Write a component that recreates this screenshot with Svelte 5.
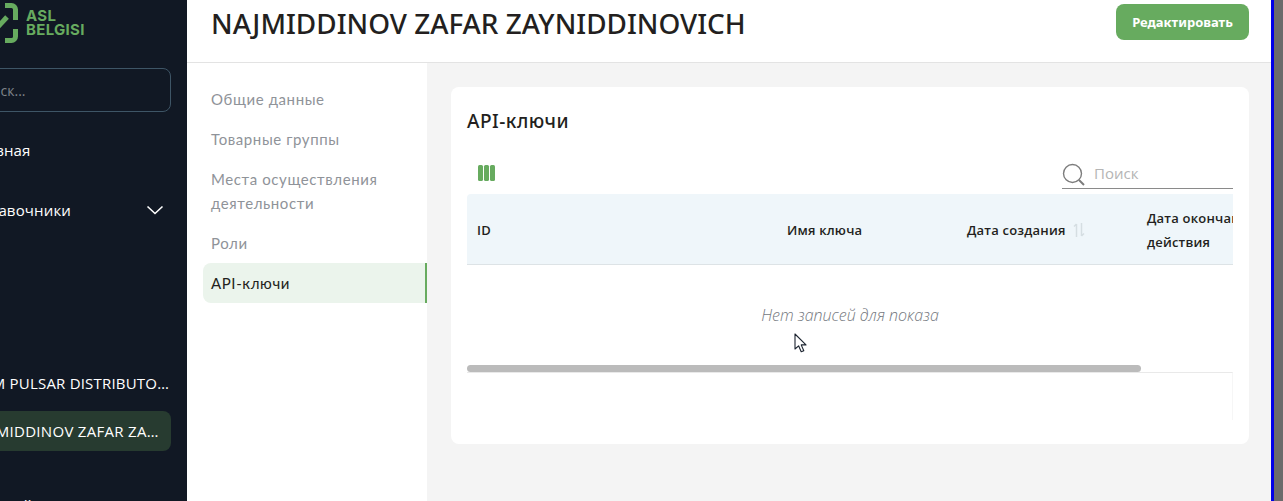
<script lang="ts">
  const navItems = [
    { label: 'Общие данные', active: false },
    { label: 'Товарные группы', active: false },
    { label: 'Места осуществления деятельности', active: false },
    { label: 'Роли', active: false },
    { label: 'API-ключи', active: true }
  ];

  const columns = [
    { label: 'ID', width: 310, sort: false },
    { label: 'Имя ключа', width: 180, sort: false },
    { label: 'Дата создания', width: 180, sort: true },
    { label: 'Дата окончания действия', width: 180, sort: false }
  ];
</script>

{#snippet chevron()}
  <svg width="18" height="10" viewBox="0 0 18 10" fill="none" stroke="#fff" stroke-width="1.6"><path d="M1.500 1.500L9 8.500l7.500-7" /></svg>
{/snippet}

<div class="screen">
  <div class="window">
    <aside class="sidebar">
      <div class="sidebar-inner">
        <div class="logo">
          <svg class="logo-mark" width="50" height="46" viewBox="0 0 50 46" fill="none" stroke="#67ab5f" stroke-width="5">
            <path d="M35 5.500h6.500a4 4 0 0 1 4 4V20" />
            <path d="M45.500 29v7.500a4 4 0 0 1-4 4H35" />
            <path d="M26 29l11-12" />
          </svg>
          <div class="logo-text"><span>ASL</span><span>BELGISI</span></div>
        </div>
        <div class="search">Поиск...</div>
        <div class="menu-item first">Главная</div>
        <div class="menu-item">
          <span>Справочники</span>
          {@render chevron()}
        </div>
        <div class="org-list">
          <div class="org">FIRM PULSAR DISTRIBUTORS LLC</div>
          <div class="org current">NAJMIDDINOV ZAFAR ZAYNIDDINOVICH</div>
        </div>
        <div class="menu-item bottom">
          <span>Настройки</span>
          {@render chevron()}
        </div>
      </div>
    </aside>

    <div class="content">
      <header class="topbar">
        <h1>NAJMIDDINOV ZAFAR ZAYNIDDINOVICH</h1>
        <button class="edit">Редактировать</button>
      </header>

      <div class="body">
        <nav class="subnav">
          {#each navItems as item}
            <div class="subnav-item" class:active={item.active}>{item.label}</div>
          {/each}
        </nav>

        <main class="main">
          <section class="card">
            <h2>API-ключи</h2>
            <div class="toolbar">
              <svg class="cols" width="17" height="16" viewBox="0 0 17 16" fill="#67ab5f">
                <rect x="0" y="0" width="5" height="16" rx="1.5" />
                <rect x="6" y="0" width="5" height="16" rx="1.5" />
                <rect x="12" y="0" width="5" height="16" rx="1.5" />
              </svg>
              <div class="table-search">
                <svg width="24" height="24" viewBox="0 0 24 24" fill="none" stroke="#7d7d7d" stroke-width="1.4">
                  <circle cx="10.5" cy="10.5" r="9" />
                  <path d="M17 17l5 5" stroke-width="2" />
                </svg>
                <span>Поиск</span>
              </div>
            </div>
            <div class="table-wrap">
              <div class="thead">
                {#each columns as col}
                  <div class="th" style="width: {col.width}px">
                    <span>{col.label}</span>
                    {#if col.sort}
                      <svg width="12" height="14" viewBox="0 0 12 14" fill="none" stroke="#d5dee2" stroke-width="1.5">
                        <path d="M3.5 14V1M1 3.5L3.5 1" />
                        <path d="M8.5 0v13M11 10.5L8.5 13" />
                      </svg>
                    {/if}
                  </div>
                {/each}
              </div>
              <div class="empty">Нет записей для показа</div>
              <div class="scrollbar"><div class="thumb"></div></div>
              <div class="footer-box"></div>
            </div>
          </section>
        </main>
      </div>
    </div>

    <svg class="cursor" width="14" height="20" viewBox="0 0 14 20">
      <path d="M1 1v15l3.6-3.2 2.6 6 2.6-1.1-2.6-5.8H12z" fill="#fff" stroke="#1c2430" stroke-width="1.1" stroke-linejoin="round" />
    </svg>
  </div>
  <div class="edge"></div>
</div>

<style>
  :global(body) {
    margin: 0;
  }

  .screen {
    display: flex;
    height: 501px;
    overflow: hidden;
    font-family: 'Open Sans', sans-serif;
  }

  .window {
    position: relative;
    flex: 1;
    display: flex;
    min-width: 0;
    background: #f4f4f4;
  }

  .edge {
    width: 9px;
    border-left: 3px solid #0000e6;
    background: #6b6b6b;
  }

  .sidebar {
    width: 187px;
    flex-shrink: 0;
    background: #111824;
    overflow: hidden;
  }

  .sidebar-inner {
    width: 201px;
    margin-left: -30px;
    display: flex;
    flex-direction: column;
  }

  .logo {
    display: flex;
    gap: 7px;
    height: 68px;
    align-items: flex-start;
  }

  .logo-text {
    display: flex;
    flex-direction: column;
    padding-top: 9px;
    margin-left: -1px;
    font-family: 'Inter', sans-serif;
    font-weight: 700;
    font-size: 15px;
    line-height: 14px;
    letter-spacing: 0.3px;
    color: #67ab5f;
  }

  .search {
    height: 42px;
    border: 1px solid #3e5566;
    border-radius: 8px;
    display: flex;
    align-items: center;
    padding-left: 2px;
    font-size: 14px;
    color: #7f848a;
  }

  .menu-item {
    height: 60px;
    display: flex;
    align-items: center;
    justify-content: space-between;
    padding-right: 7px;
    font-size: 15px;
    letter-spacing: 0.15px;
    color: #fff;
  }

  .menu-item.first {
    margin-top: 8px;
  }

  .org-list {
    margin-top: 123px;
    display: flex;
    flex-direction: column;
    gap: 8px;
  }

  .org {
    height: 40px;
    line-height: 40px;
    font-size: 15px;
    letter-spacing: 0.2px;
    color: #fff;
    white-space: nowrap;
    overflow: hidden;
    text-overflow: ellipsis;
  }

  .org.current {
    background: #273b30;
    border-radius: 8px;
    padding-right: 6px;
    letter-spacing: 0.3px;
  }

  .menu-item.bottom {
    margin-top: 24px;
  }

  .content {
    flex: 1;
    min-width: 0;
    display: flex;
    flex-direction: column;
  }

  .topbar {
    height: 63px;
    box-sizing: border-box;
    flex-shrink: 0;
    background: #fff;
    border-bottom: 1px solid #e3e3e3;
    display: flex;
    justify-content: space-between;
    align-items: flex-start;
    padding: 4px 22px 0 24px;
  }

  h1 {
    margin: 0;
    font-size: 27.9px;
    line-height: 38px;
    font-weight: 500;
    color: #231f20;
    font-family: 'Noto Sans', sans-serif;
  }

  .edit {
    width: 133px;
    height: 36px;
    border: none;
    border-radius: 8px;
    background: #67ab5f;
    color: #fff;
    font-family: 'Noto Sans', sans-serif;
    font-weight: 700;
    font-size: 13px;
  }

  .body {
    flex: 1;
    display: flex;
    min-height: 0;
  }

  .subnav {
    width: 240px;
    flex-shrink: 0;
    box-sizing: border-box;
    background: #fff;
    padding: 16px 0 0 16px;
    display: flex;
    flex-direction: column;
  }

  .subnav-item {
    padding: 8px 8px;
    line-height: 24px;
    font-family: 'Lato', sans-serif;
    font-size: 15px;
    letter-spacing: 0.6px;
    color: #8f9399;
  }

  .subnav-item.active {
    background: #ebf4ec;
    color: #231f20;
    border-right: 2px solid #67ab5f;
    border-radius: 8px 0 0 8px;
  }

  .main {
    flex: 1;
    min-width: 0;
    padding: 24px 22px 0 24px;
  }

  .card {
    box-sizing: border-box;
    height: 357px;
    background: #fff;
    border-radius: 8px;
    padding: 0 16px;
    overflow: hidden;
  }

  h2 {
    margin: 0;
    padding-top: 22px;
    line-height: 24px;
    font-family: 'Noto Sans', sans-serif;
    font-size: 19px;
    font-weight: 500;
    letter-spacing: 0.5px;
    color: #231f20;
  }

  .toolbar {
    display: flex;
    justify-content: space-between;
    align-items: flex-end;
    height: 56px;
  }

  .cols {
    margin: 0 0 8px 11px;
  }

  .table-search {
    width: 171px;
    height: 28px;
    box-sizing: border-box;
    border-bottom: 1px solid #8a8a8a;
    display: flex;
    align-items: center;
    gap: 8px;
    font-size: 15px;
    color: #b5b5b5;
  }

  .table-search span {
    margin-bottom: 4px;
  }

  .table-wrap {
    margin-top: 5px;
    overflow: hidden;
  }

  .thead {
    display: flex;
    width: 850px;
    height: 70px;
    background: #eff6fa;
    border-bottom: 1px solid #dde3e6;
    border-radius: 4px 4px 0 0;
  }

  .th {
    box-sizing: border-box;
    padding: 2px 10px 0;
    display: flex;
    align-items: center;
    gap: 7px;
    font-size: 13px;
    letter-spacing: 0.2px;
    line-height: 24px;
    font-weight: 600;
    color: #231f20;
    flex-shrink: 0;
  }

  .empty {
    height: 100px;
    display: flex;
    align-items: center;
    justify-content: center;
    font-style: italic;
    font-weight: 300;
    font-size: 16px;
    color: #74787e;
  }

  .scrollbar {
    height: 7px;
  }

  .thumb {
    width: 674px;
    height: 7px;
    border-radius: 4px;
    background: #bbb;
  }

  .footer-box {
    height: 48px;
    box-sizing: border-box;
    border-top: 1px solid #e9e9e9;
    border-right: 1px solid #f6f6f6;
  }

  .cursor {
    position: absolute;
    left: 794px;
    top: 333px;
  }
</style>
